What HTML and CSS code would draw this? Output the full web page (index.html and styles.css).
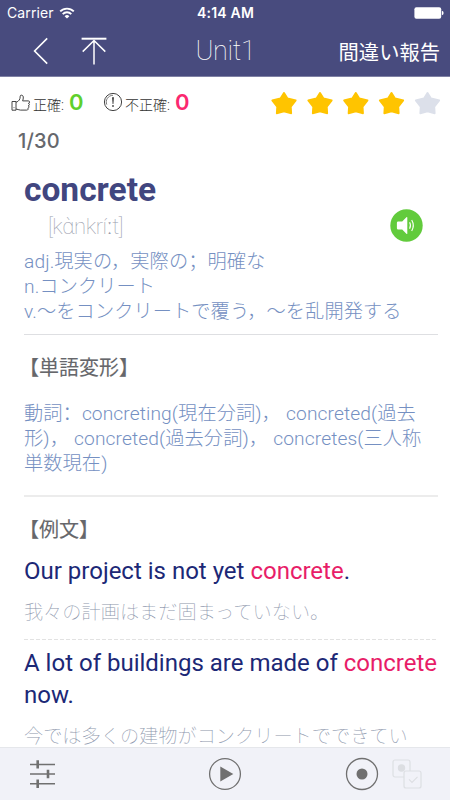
FILE: index.html
```html
<!DOCTYPE html>
<html lang="ja">
<head>
<meta charset="utf-8">
<title>Unit1</title>
<link rel="stylesheet" href="styles.css">
</head>
<body>
<div class="app">
  <header class="header">
    <div class="status">
      <div class="carrier"><span>Carrier</span>
        <svg width="16" height="12" viewBox="0 0 16 12" fill="none" stroke="#fff" stroke-width="1.9"><path d="M1.2 4.4a9.6 9.6 0 0 1 13.6 0M3.7 7.1a6 6 0 0 1 8.6 0"/><path d="M8 11.6 5.6 9.2a3.4 3.4 0 0 1 4.8 0z" fill="#fff" stroke="none"/></svg>
      </div>
      <span class="time">4:14 AM</span>
      <svg class="battery" width="30" height="12" viewBox="0 0 30 12"><rect x=".4" y=".2" width="26.8" height="11.6" rx="2" fill="#fff"/><path d="M27.9 3.8q1.7.5 1.7 2.2t-1.7 2.2z" fill="#fff"/></svg>
    </div>
    <nav class="nav">
      <div class="nav-left">
        <svg width="16" height="28" viewBox="0 0 16 28" fill="none" stroke="#fff" stroke-width="1.6"><path d="M14.2 1.4 1.6 14l12.6 12.6"/></svg>
        <svg width="26" height="28" viewBox="0 0 26 28" fill="none" stroke="#fff" stroke-width="1.5"><path d="M.6 1.7h24.8" stroke-width="2"/><path d="M13 27.4V3.5M1.7 14.6 13 3.5l11.3 11.1"/></svg>
      </div>
      <h1 class="title">Unit1</h1>
      <span class="report">間違い報告</span>
    </nav>
  </header>

  <main class="content">
    <section class="score">
      <svg class="thumb" width="20" height="18" viewBox="0 0 20 18" fill="none" stroke="#444" stroke-width="1"><path d="M1 7.5h4v8.7H1zM5 8.3C8 7.4 9.3 5.2 9.2 2.2c0-1.6 2.8-1.4 3.1.7.2 1.5-.3 2.8-.7 4h5.8c1.6 0 1.6 2.3 0 2.5 1.5.2 1.2 2.3-.2 2.4 1.2.2 1 2.1-.4 2.3.8.8.3 2-1 2H9.4C7.5 16.1 6.7 15 5 15"/><path d="M2.6 13.6h.8"/></svg>
      <span class="score-label">正確:</span><span class="score-num good">0</span>
      <svg class="alert" width="20" height="20" viewBox="0 0 20 20" fill="none" stroke="#444"><circle cx="10" cy="10" r="8.6" stroke-width="1"/><path d="M3.8 12.6A6.7 6.7 0 0 1 10 3.3" stroke-width=".7"/><path d="M9 5.3h2l-.6 6.6h-.8z" fill="#444" stroke="none"/><circle cx="10" cy="14" r=".9" fill="#444" stroke="none"/></svg>
      <span class="score-label">不正確:</span><span class="score-num bad">0</span>
      <svg class="stars" width="170" height="24" viewBox="0 0 170 24">
        <defs><path id="star" d="M13 1.8 16.6 7.4 24.8 9.4 19.9 15.7 20.3 22.4 13 20.4 5.7 22.4 6.1 15.7 1.2 9.4 9.4 7.4z" stroke-width="1.6" stroke-linejoin="round"/></defs>
        <g fill="#ffc400" stroke="#ffc400"><use href="#star"/><use href="#star" x="36"/><use href="#star" x="71.8"/><use href="#star" x="107.5"/></g>
        <use href="#star" x="143.5" fill="#dce0ea" stroke="#dce0ea"/>
      </svg>
    </section>
    <div class="progress">1/30</div>

    <section class="entry">
      <h2 class="word">concrete</h2>
      <div class="pron">
        <span class="phonetic">[kὰnkríːt]</span>
        <svg width="33" height="33" viewBox="0 0 33 33"><circle cx="16.5" cy="16.5" r="16.2" fill="#62cb3c"/><path d="M8.2 12.5h4l4.2-4.3q.9-.5.9.4v15.8q0 .9-.9.4l-4.2-4.3h-4q-1.3 0-1.3-1.2v-5.6q0-1.2 1.3-1.2z" fill="#fff"/><path d="M19.6 13.3q1.8 3.2 0 6.4M21.7 11q3.2 5.5 0 11" fill="none" stroke="#fff" stroke-width="1.1"/></svg>
      </div>
      <p class="blue-text meaning">adj.現実の，実際の<span class="sc" lang="zh-CN">；</span>明確な<br>n.コンクリート<br>v.〜をコンクリートで覆う，〜を乱開発する</p>
    </section>

    <section class="forms">
      <h3 class="heading">【単語変形】</h3>
      <p class="blue-text">動詞<span class="sc" lang="zh-CN">：</span>concreting(現在分詞)， concreted(過去<br>形)， concreted(過去分詞)， concretes(三人称<br>単数現在)</p>
    </section>

    <section class="examples">
      <h3 class="heading">【例文】</h3>
      <div class="example">
        <p class="en">Our project is not yet <em>concrete</em>.</p>
        <p class="ja">我々の計画はまだ固まっていない。</p>
      </div>
      <svg class="dashes" width="414" height="1"><path d="M0 .5h414" stroke="#e2e2e2" stroke-dasharray="4 2"/></svg>
      <div class="example second">
        <p class="en">A lot of buildings are made of <em>concrete</em><br>now.</p>
        <p class="ja">今では多くの建物がコンクリートでできてい</p>
      </div>
    </section>
  </main>

  <footer class="toolbar">
    <svg width="27" height="30" viewBox="0 0 27 30" stroke="#707070"><path d="M1 5.5h25M1 15h25M1 24.8h25" stroke-width="1.5"/><path d="M8.7 1.3v8.3M19 10.8v8.4M8.7 20.5V29" stroke-width="2.6"/></svg>
    <svg class="play" width="34" height="34" viewBox="0 0 34 34"><circle cx="17" cy="17" r="15.4" fill="none" stroke="#707070" stroke-width="1.3"/><path d="M12.3 9.4 25.3 17l-13 7.6z" fill="#707070"/></svg>
    <svg class="record" width="34" height="34" viewBox="0 0 34 34"><circle cx="17" cy="17" r="15.5" fill="none" stroke="#707070" stroke-width="1.3"/><circle cx="17" cy="17" r="5.5" fill="#707070"/></svg>
    <svg class="cards" width="30" height="30" viewBox="0 0 30 30" fill="none" stroke="#dddfe3" stroke-width="1.2"><rect x="1" y="1" width="17" height="17" rx="2"/><circle cx="9.5" cy="9" r="3.7" fill="#dcdee2" stroke="none"/><rect x="12" y="12" width="17" height="17" rx="2" fill="#f1f2f8"/><path d="m17 20.3 3 3 5.5-5.5"/></svg>
  </footer>
</div>
</body>
</html>
```
FILE: styles.css
```css
* { box-sizing: border-box; margin: 0; padding: 0; }
svg { display: block; flex: none; }
body { width: 450px; height: 800px; overflow: hidden; background: #fff; font-family: Roboto, "Noto Sans CJK JP", sans-serif; }
.app { display: flex; flex-direction: column; width: 450px; height: 800px; }
.header { flex: none; height: 77px; background: #484b7e; border-bottom: 1px solid #7f81a4; color: #fff; }
.status { display: grid; grid-template-columns: 1fr auto 1fr; align-items: center; height: 25px; padding: 0 6px 0 7px; font: 14px/25px Inter, sans-serif; }
.carrier { display: flex; align-items: center; gap: 5px; letter-spacing: .1px; }
.time { font-weight: 600; letter-spacing: .2px; }
.battery { justify-self: end; }
.nav { display: grid; grid-template-columns: 1fr auto 1fr; align-items: center; height: 51px; padding: 0 10px 0 33px; }
.nav-left { display: flex; gap: 32px; }
.title { font-size: 27px; font-weight: 100; line-height: 50px; letter-spacing: -.3px; margin-left: -22px; }
.report { justify-self: end; font-size: 20.3px; white-space: nowrap; }
.content { flex: 1; min-height: 0; overflow: hidden; padding-left: 24px; }
.score { display: flex; align-items: center; width: 430px; height: 50px; margin-left: -13px; }
.thumb { margin-top: 2px; }
.score-label { font-size: 14px; font-weight: 300; color: #333; margin: 3px 5px 0 2px; white-space: nowrap; }
.score-num { width: 14px; font: 600 22px/50px Inter, sans-serif; }
.good { color: #5fd02d; }
.bad { color: #fb286f; }
.alert { margin-left: 20px; }
.stars { margin-left: auto; margin-top: 2px; }
.progress { height: 38px; margin-left: -6px; font: 500 20px/28px Inter, sans-serif; letter-spacing: .2px; color: #66686d; }
.entry { width: 414px; height: 170px; border-bottom: 1px solid #dedfe2; }
.word { height: 44px; font-size: 33.5px; font-weight: 700; line-height: 49px; color: #41467f; }
.pron { display: flex; justify-content: space-between; height: 39px; padding: 0 15px 0 24px; }
.phonetic { font-size: 22px; font-weight: 100; line-height: 36px; letter-spacing: -.45px; color: #999dac; }
.blue-text { font-size: 19.2px; font-weight: 300; line-height: 25px; letter-spacing: .1px; color: #7590c2; white-space: nowrap; }
.sc { font-family: "Noto Sans CJK SC", sans-serif; }
.forms { width: 414px; height: 162px; border-bottom: 2px solid #ececec; }
.heading { height: 65px; margin-left: -5px; font-size: 20px; font-weight: 400; line-height: 67px; color: #66676b; -webkit-text-stroke: .1px #66676b; }
.examples { width: 414px; }
.examples .heading { height: 58px; }
.forms .blue-text { word-spacing: .4px; }
.example { height: 84px; white-space: nowrap; }
.en { font-size: 24px; line-height: 32px; color: #1c2876; }
.en em { font-style: normal; color: #e81d68; }
.ja { margin-top: 8px; font-size: 19.2px; font-weight: 100; line-height: 36px; color: #8c96ac; }
.second { padding-top: 7px; }
.toolbar { display: flex; flex: none; align-items: center; height: 53px; padding: 0 0 1px 29px; background: #f1f2f8; border-top: 1px solid #e5e7eb; }
.play { margin-left: 152px; }
.record { margin-left: 103px; }
.cards { margin-left: 13px; }
```
